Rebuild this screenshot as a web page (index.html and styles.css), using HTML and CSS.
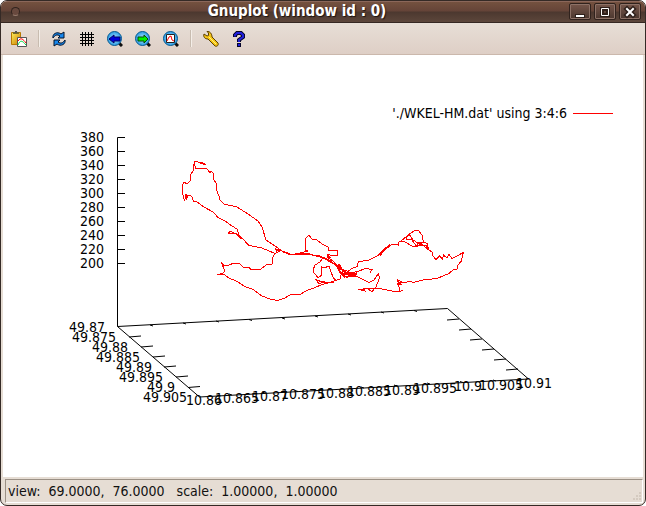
FILE: index.html
```html
<!doctype html>
<html lang="en">
	<head>
		<meta charset="UTF-8" />
		<meta name="viewport" content="width=device-width, initial-scale=1.0" />
		<title>Gnuplot (window id : 0)</title>
		<link rel="stylesheet" href="styles.css" />
	</head>
	<body>
		<div class="window">
			<header class="titlebar">
				<button class="menu-dot" aria-label="Window menu"></button>
				<h1>Gnuplot (window id : 0)</h1>
				<div class="window-buttons">
					<button aria-label="Minimize">
						<svg viewBox="0 0 20 14"><path d="M5 9h10v4H5z" fill="#30211c" /><path d="M6 10h8v2H6z" fill="#fff" /></svg>
					</button>
					<button aria-label="Maximize">
						<svg viewBox="0 0 20 14"><path d="M7 4h6v6H7z" fill="none" stroke="#30211c" stroke-width="4" /><path d="M6.500 3.500h7v7h-7z" fill="none" stroke="#fff" /></svg>
					</button>
					<button aria-label="Close">
						<svg viewBox="0 0 20 14"><path d="M7 4l6 6M13 4l-6 6" stroke="#30211c" stroke-width="5" stroke-linecap="square" /><path d="M7 4l6 6M13 4l-6 6" stroke="#fff" stroke-width="2" stroke-linecap="square" /></svg>
					</button>
				</div>
			</header>

			<div class="toolbar" role="toolbar" aria-label="Plot tools">
				<button aria-label="Copy to clipboard">
					<svg viewBox="0 0 16 16">
						<defs>
							<linearGradient id="board" x2="1" y2="1"><stop stop-color="#fff05a" /><stop offset="1" stop-color="#c87a00" /></linearGradient>
							<radialGradient id="lens"><stop stop-color="#b8e8ff" /><stop offset="1" stop-color="#279ae4" /></radialGradient>
						</defs>
						<path d="M.5 1.500h9v12h-9z" fill="url(#board)" stroke="#b87800" />
						<path d="M2 1h6v2H2z" fill="#776a28" /><path d="M4 0h2v2H4z" fill="#555" />
						<path d="M6.500 6.500h9v9h-9z" fill="#fff" stroke="#555" />
						<path d="M7 10c3-4 5-2 8 2" fill="none" stroke="red" /><path d="M7 14c2-5 4-5 8 0" fill="none" stroke="#0d4" />
					</svg>
				</button>
				<span class="separator"></span>
				<button aria-label="Replot">
					<svg viewBox="0 0 16 16">
						<path d="M2 7C1 3 6 0 10 3l3-2v6H7l2-2C6 3 4 4 2 7z" fill="#1687ee" stroke="#051329" />
						<path d="M14 9c1 4-4 7-8 4l-3 2V9h6l-2 2c3 2 5 1 7-2z" fill="#1687ee" stroke="#051329" />
					</svg>
				</button>
				<button aria-label="Toggle grid">
					<svg viewBox="0 0 16 16"><path d="M3.500 1v14M6.500 1v14M9.500 1v14M12.500 1v14M1 3.500h14M1 6.500h14M1 9.500h14M1 12.500h14" stroke="#000" /></svg>
				</button>
				<button aria-label="Previous zoom">
					<svg viewBox="0 0 16 16"><path d="M12 12l3 3" stroke="#111" stroke-width="3" /><circle cx="7.500" cy="7.500" r="7" fill="url(#lens)" stroke="#08598f" /><path d="M2 8l5-4v2h6v4H7v2z" fill="#0000d8" stroke="#000064" /></svg>
				</button>
				<button aria-label="Next zoom">
					<svg viewBox="0 0 16 16"><path d="M12 12l3 3" stroke="#111" stroke-width="3" /><circle cx="7.500" cy="7.500" r="7" fill="url(#lens)" stroke="#08598f" /><path d="M13 8L9 4v2H3v4h6v2z" fill="#00ef00" stroke="#064a06" /></svg>
				</button>
				<button aria-label="Autoscale">
					<svg viewBox="0 0 16 16"><path d="M12 12l3 3" stroke="#111" stroke-width="3" /><circle cx="7.500" cy="7.500" r="7" fill="url(#lens)" stroke="#08598f" /><path d="M3.500 3.500h8v8h-8z" fill="#fff" stroke="#222" /><path d="M4 10l2-4 2-1 1 4 2 1" fill="none" stroke="red" /></svg>
				</button>
				<span class="separator"></span>
				<button aria-label="Configure">
					<svg viewBox="0 0 16 16"><path d="M4 .5L5.500 2v2.500L4 5 1 3C0 6 2 8 5 8l7 7c2 1 4-1 3-3L9 6c0-3-2-6-5-5.500z" fill="#f6c516" stroke="#5c4000" /><path d="M6 6l7 7" stroke="#fff27a" /></svg>
				</button>
				<button aria-label="Help">
					<svg viewBox="0 0 16 16"><g fill="none" stroke="#05052c" stroke-width="4"><path d="M4 6V4l2-2h4l2 2v2L8 9v2" /><path d="M6 14h4" /></g><g fill="none" stroke="#2020dc" stroke-width="2"><path d="M4 5.500V4l2-2h4l2 2v2L8 9v2" /><path d="M7 14h2" /></g></svg>
				</button>
			</div>

			<main class="plot">
				<svg viewBox="3 55 640 422" role="img" aria-label="3D plot of WKEL-HM.dat">
					<text class="end" x="567" y="118">'./WKEL-HM.dat' using 3:4:6</text>
					<path class="track" d="M573 113.500h40" />

					<!-- z axis -->
					<g class="end">
						<text x="104" y="142">380</text>
						<text x="104" y="156">360</text>
						<text x="104" y="170">340</text>
						<text x="104" y="184">320</text>
						<text x="104" y="198">300</text>
						<text x="104" y="212">280</text>
						<text x="104" y="226">260</text>
						<text x="104" y="240">240</text>
						<text x="104" y="254">220</text>
						<text x="104" y="268">200</text>
					</g>
					<path class="axis" d="M125 137.500h-7.500V326.500M117 151.500h8M117 165.500h8M117 179.500h8M117 193.500h8M117 207.500h8M117 221.500h8M117 235.500h8M117 249.500h8M117 263.500h8" />

					<!-- base plane -->
					<path class="axis" d="M117.500 326.500L447.500 308.500 528.500 379 199.500 397z" />
					<path class="axis" d="M129 337l12-1M141 347l12-1M153 357l12-1M164 367l12-1M176 377l12-1M188 387.500l12-1" />
					<path class="axis" d="M459 319l-12 1M471 329l-12 1M482 339l-12 1M494 349l-12 1M506 359l-12 1M518 369l-12 1" />
					<path class="axis" d="M150 325l3 1M183 323l3 1M216 321l3 1M249 319.500l3 1M282 318l3 1M315 316l3 1M348 314l3 1M381 312l3 1M414 310.500l3 1" />
					<path class="axis" d="M232 395l-3-1M265 393l-3-1M298 391.500l-3-1M331 390l-3-1M364 388l-3-1M397 386l-3-1M430 384l-3-1M463 382.500l-3-1M496 381l-3-1" />

					<g class="end">
						<text x="105" y="332">49.87</text>
						<text x="116" y="342">49.875</text>
						<text x="128" y="352">49.88</text>
						<text x="140" y="362">49.885</text>
						<text x="152" y="372">49.89</text>
						<text x="163" y="382">49.895</text>
						<text x="175" y="392">49.9</text>
						<text x="187" y="402">49.905</text>
					</g>
					<g class="middle">
						<text x="204" y="405">10.86</text>
						<text x="237" y="403">10.865</text>
						<text x="270" y="401">10.87</text>
						<text x="303" y="399">10.875</text>
						<text x="336" y="398">10.88</text>
						<text x="369" y="396">10.885</text>
						<text x="402" y="395">10.89</text>
						<text x="435" y="393">10.895</text>
						<text x="468" y="391">10.9</text>
						<text x="501" y="390">10.905</text>
						<text x="534" y="388">10.91</text>
					</g>

					<!-- upper left branch -->
					<path class="track" d="M206 165L203 163 198 162 195 161 194 164 196 168.500 206 168 210 172.500 211 171 213.500 173.500 214 180 216 183 216 189 219 196 220 200 224 204 237 207 248 214 258 221 262 227 266 240 272 244 278 248 283 252 291 255 300 253 310 254 323 258 330 261 339 267 349 274" />
					<path class="track" d="M202 162.500L206 165 195 161 193 167 193 171 191 174 190 181 187 184 184 182 182.500 185 183 195 184.500 201 186 194 186 200 188 195 190 195 192 197 193.500 201 197 202 204 207 213 212 218 217.500 225 221 232 226 237 229 239 235 241.500 239 236 234 230 231 228.500 233.500 235 233 241 237 249 245.500 262 248 275 253.500 273 257 272 264 267 264.500 261 269 251 269.500 249 267.500 243 267 240 264 234 263 229 265 224 265.500 221 262 225 271 223 273 217 275 224 274.500 228 277.500 237 281.500 245 286.500 253 289.500 262 296 270 299 277 300.500 284 298.500 291 294.500 299 295 307 290.500 315 287.500 322 284.500 330 282.500 340 279 341 275" />
					<path class="track" d="M280 250L275.500 249 277 252.500 280 251 276 250M283 251L290 254 304 254 320 256 331 261" />

					<!-- centre loops -->
					<path class="track" d="M300 253L308 251 305 250 305 245 306 238 309 235 312 239 317 240 322 244 328 247 328.500 250.500 337 250.500 338 255 333 255.500 327 254.500 327 257 333 261 338 266 343 269.500 348 271.500 351 269 357 266.500 358.500 261.500 368 260.500 378 255.500 383 250.500 390 244" />
					<path class="track" d="M323 258L320 262 315 265 313 270 314 273 318 277.500 322 275 321.500 267 324 268 329 266 331 272 333 277 336 281M334 282L322 282 316 279.500 319 284 325 281 321 281M328 255L331 258 327 256" />
					<path class="track" d="M323 258L334 264 338 268 342 274 347 278 351 275 356 276 353 272 346 275 339 264 337 267 342 270 344 277 340 273 336 265 341 268 349 276 357 274 348 273 358 271.500 365 268.500 372 269.500 370 272.500M338 270L344 275 354 274 349 277 357 276.500 362 279 369 282.500 374 280 378.500 273.500 379.500 278 376 287 372 291.500 367 288.500 358.500 289.500 365 291 363 288 377 288 390 290.500 397 292 403 290.500M345 276L353 277 356 273 347 274" />

					<!-- right loop -->
					<path class="track" d="M399 291L399 287 397.500 280 402 282 397 284 401 284 398 281M402 282L405 283 409 281 413 282.500 423 280 437 278.500 443 276 449 273.500 453 270 457 269 458 265 461 261.500 463.500 252.500 452 258.500 449 254.500 447 258 443.500 255 442.500 259 439.500 256 436 259.500 433 256 432 252 429 250 427 243.500 423.500 242 422 235 419 231 415 230.500 408 235 403 239.500 398.500 242.500 399 245.500 396 244 392 244 385 250 380 255.500" />
					<path class="track" d="M400 241.500L405 242 412 246 417 246.500 423.500 242 418 243 413 240 409 234 406 239 412 240 417 247 418 243 423 245 428 250 426 245 416 246" />
				</svg>
			</main>

			<footer class="statusbar">
				<output class="status-text">view:  69.0000,  76.0000   scale:  1.00000,  1.00000</output>
				<svg class="grip" viewBox="0 0 12 12"><path d="M9 3h2M6 6h2M9 6h2M3 9h2M6 9h2M9 9h2" stroke="#c2b7ab" /></svg>
			</footer>
		</div>
	</body>
</html>
```

FILE: styles.css
```css
* {
	box-sizing: border-box;
}
body {
	margin: 0;
	background: #fff;
	color: #111;
	font-family: 'DejaVu Sans Condensed', 'DejaVu Sans', sans-serif;
	font-size: 14px;
}
button {
	padding: 0;
	border: none;
	background: none;
}
svg {
	display: block;
}
.window {
	display: flex;
	flex-direction: column;
	height: 100vh;
	overflow: hidden;
	border: 1px solid #352a26;
	border-radius: 7px;
	background: #e6ddd4;
}
.titlebar {
	display: grid;
	grid-template-columns: 24px 1fr 76px;
	align-items: center;
	flex: none;
	height: 22px;
	border-top: 1px solid #8b675a;
	border-bottom: 1px solid #352722;
	background: linear-gradient(#74513f, #654438 45%, #4c382f 50%, #5c463b);
}
.titlebar h1 {
	margin: 0;
	padding-bottom: 2px;
	color: #fff;
	font-size: 15px;
	line-height: 18px;
	text-align: center;
	text-shadow: 1px 1px 1px #1c1310;
}
.menu-dot {
	width: 9px;
	height: 9px;
	margin: 0 0 2px 10px;
	border: 1px solid #30231e;
	border-bottom-color: #95796c;
	border-radius: 50%;
	background: #68493e;
}
.window-buttons {
	display: flex;
	justify-content: flex-end;
	gap: 3px;
	padding: 0 4px 2px 0;
}
.window-buttons button {
	width: 22px;
	height: 17px;
	padding: 1px 0;
	border: 1px solid #30221d;
	border-radius: 2px;
	background: linear-gradient(#76564a, #4b372f);
	box-shadow: inset 0 0 0 1px #8d7267;
}
.window-buttons svg {
	width: 20px;
	height: 14px;
}
.toolbar {
	display: flex;
	align-items: center;
	gap: 4px;
	flex: none;
	height: 32px;
	padding: 0 6px;
	border-bottom: 1px solid #cbb8ac;
	background: linear-gradient(#e7ded6, #decfc6);
}
.toolbar button {
	width: 24px;
	height: 24px;
	padding: 4px;
}
.toolbar svg {
	width: 16px;
	height: 16px;
}
.separator {
	width: 2px;
	height: 17px;
	margin: 0 3px;
	border-left: 1px solid #c8bcb0;
	border-right: 1px solid #f4eee8;
}
.plot {
	flex: 1;
	min-height: 0;
	margin: 0 2px;
	background: #fff;
}
.plot svg {
	width: 100%;
	height: 100%;
}
.plot text {
	fill: #000;
}
.end {
	text-anchor: end;
}
.middle {
	text-anchor: middle;
}
.axis {
	fill: none;
	stroke: #000;
	stroke-width: 1px;
}
.track {
	fill: none;
	stroke: #f00;
	stroke-width: 1px;
	shape-rendering: crispEdges;
}
.statusbar {
	display: flex;
	align-items: center;
	justify-content: space-between;
	flex: none;
	height: 24px;
	margin: 2px 2px 2px 4px;
	padding-left: 2px;
	border: 1px solid #9b9085;
	border-right-color: #fff;
	border-bottom-color: #fff;
}
.status-text {
	white-space: pre;
}
.grip {
	align-self: flex-end;
	width: 12px;
	height: 12px;
}
```
